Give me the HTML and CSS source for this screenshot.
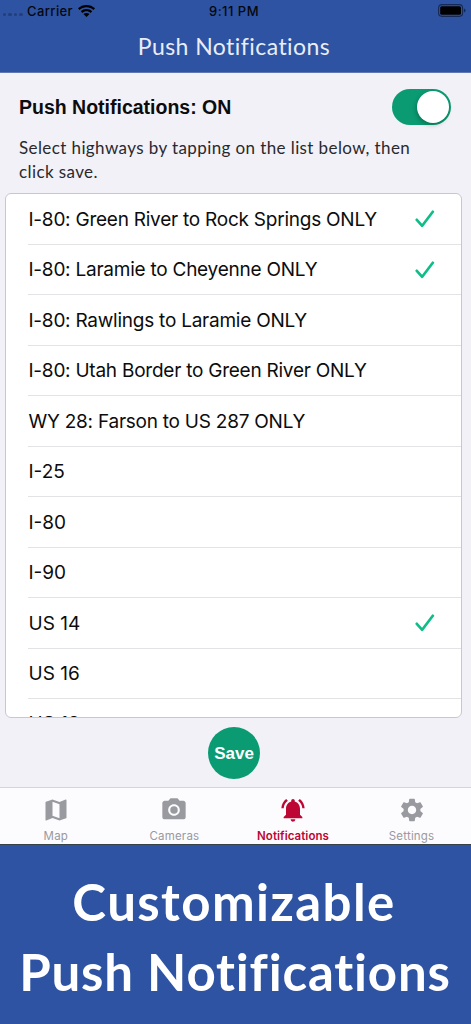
FILE: index.html
```html
<!DOCTYPE html>
<html lang="en">
<head>
<meta charset="utf-8">
<title>Push Notifications</title>
<link rel="stylesheet" href="styles.css">
</head>
<body>
<header class="header">
  <div class="status">
    <div class="carrier">
      <span class="dots"><i></i><i></i><i></i><i></i></span>
      <span class="carrier-name">Carrier</span>
      <svg class="wifi" viewBox="0 0 17 12"><path d="M8.5 0C5.2 0 2.2 1.2 0 3.3L1.6 5C3.400 3.300 5.800 2.300 8.500 2.300S13.600 3.300 15.400 5L17 3.300C14.800 1.200 11.800 0 8.500 0z"/><path d="M8.500 4C6.300 4 4.300 4.800 2.800 6.200L4.400 7.900C5.500 6.900 6.900 6.300 8.500 6.300S11.500 6.900 12.600 7.900L14.200 6.200C12.700 4.800 10.700 4 8.500 4z"/><path d="M8.500 7.900C7.300 7.900 6.300 8.300 5.500 9L8.500 12L11.500 9C10.700 8.300 9.700 7.900 8.500 7.900z"/></svg>
    </div>
    <span class="time">9:11 PM</span>
    <svg class="battery" viewBox="0 0 28 13"><rect x=".6" y=".6" width="24" height="11.800" rx="3.300" fill="none" stroke="#172a55" stroke-width="1.100"/><rect x="2.200" y="2.200" width="20.800" height="8.600" rx="1.600"/><path d="M26 4.500Q27.600 5 27.600 6.500T26 8.500z" fill="#172a55"/></svg>
  </div>
  <h1 class="title">Push Notifications</h1>
</header>
<main class="content">
  <div class="toggle-row">
    <h2 class="toggle-label">Push Notifications: ON</h2>
    <span class="switch"><span class="knob"></span></span>
  </div>
  <p class="hint">Select highways by tapping on the list below, then<br>click save.</p>
  <ul class="list">
    <li class="row"><span>I-80: Green River to Rock Springs ONLY</span><svg class="check" viewBox="0 0 20 18"><path d="M1.800 9.800L7.200 15.800L17.800 1.800"/></svg></li>
    <li class="row"><span>I-80: Laramie to Cheyenne ONLY</span><svg class="check" viewBox="0 0 20 18"><path d="M1.800 9.800L7.200 15.800L17.800 1.800"/></svg></li>
    <li class="row"><span>I-80: Rawlings to Laramie ONLY</span></li>
    <li class="row"><span>I-80: Utah Border to Green River ONLY</span></li>
    <li class="row"><span>WY 28: Farson to US 287 ONLY</span></li>
    <li class="row short"><span>I-25</span></li>
    <li class="row short"><span>I-80</span></li>
    <li class="row short"><span>I-90</span></li>
    <li class="row short"><span>US 14</span><svg class="check" viewBox="0 0 20 18"><path d="M1.800 9.800L7.200 15.800L17.800 1.800"/></svg></li>
    <li class="row short"><span>US 16</span></li>
    <li class="row short partial"><span>US 18</span></li>
  </ul>
  <button class="save">Save</button>
</main>
<nav class="tabs">
  <a class="tab"><svg class="icon" viewBox="0 0 24 24"><path d="M20.500 3l-.16.030L15 5.100 9 3 3.360 4.900c-.21.070-.36.250-.36.480V20.500c0 .28.220.500.500.500l.16-.030L9 18.900l6 2.100 5.640-1.900c.21-.070.36-.25.36-.48V3.500c0-.28-.22-.500-.500-.500zM15 19l-6-2.110V5l6 2.110V19z"/></svg><span>Map</span></a>
  <a class="tab"><svg class="icon" viewBox="0 0 24 24"><circle cx="12" cy="12" r="3.200"/><path d="M9 2L7.170 4H4c-1.100 0-2 .9-2 2v12c0 1.100.9 2 2 2h16c1.100 0 2-.9 2-2V6c0-1.100-.9-2-2-2h-3.170L15 2H9zm3 15c-2.760 0-5-2.240-5-5s2.240-5 5-5 5 2.240 5 5-2.240 5-5 5z"/></svg><span>Cameras</span></a>
  <a class="tab active"><svg class="icon" viewBox="0 0 24 24"><path d="M7.580 4.080L6.150 2.650C3.750 4.480 2.170 7.300 2.030 10.500h2c.15-2.650 1.510-4.970 3.550-6.420zm12.390 6.420h2c-.15-3.200-1.730-6.020-4.120-7.850l-1.420 1.430c2.020 1.450 3.390 3.770 3.540 6.420zM18 11c0-3.070-1.640-5.640-4.500-6.320V4c0-.83-.67-1.500-1.500-1.500s-1.500.67-1.500 1.500v.68C7.630 5.360 6 7.920 6 11v5l-2 2v1h16v-1l-2-2v-5zm-6 11c.14 0 .27-.010.400-.040.650-.14 1.180-.58 1.440-1.180.1-.24.150-.500.150-.78h-4c.010 1.100.9 2 2.010 2z"/></svg><span>Notifications</span></a>
  <a class="tab"><svg class="icon" viewBox="0 0 24 24"><path d="M19.140 12.940c.04-.3.060-.61.060-.94 0-.32-.02-.64-.07-.94l2.030-1.580c.18-.14.230-.41.120-.61l-1.920-3.320c-.12-.22-.37-.29-.59-.22l-2.390.96c-.5-.38-1.030-.7-1.620-.94l-.36-2.540c-.04-.24-.24-.41-.48-.41h-3.840c-.24 0-.43.17-.47.41l-.36 2.540c-.59.24-1.130.57-1.620.94l-2.390-.96c-.22-.08-.47 0-.59.22L2.740 8.870c-.12.21-.08.47.12.61l2.030 1.580c-.05.3-.09.63-.09.94s.02.64.07.94l-2.030 1.580c-.18.14-.23.41-.12.61l1.920 3.320c.12.220.37.290.59.220l2.390-.96c.5.380 1.030.7 1.620.940l.36 2.540c.05.240.24.410.48.410h3.840c.24 0 .44-.17.47-.41l.36-2.540c.59-.24 1.130-.56 1.620-.94l2.390.96c.22.080.47 0 .59-.22l1.920-3.320c.12-.22.070-.47-.12-.61l-2.010-1.580zM12 15.600c-1.980 0-3.600-1.620-3.600-3.600s1.620-3.600 3.600-3.600 3.600 1.620 3.600 3.600-1.620 3.600-3.600 3.600z"/></svg><span>Settings</span></a>
</nav>
<section class="banner">
  <div class="line-one">Customizable</div>
  <div class="line-two">Push Notifications</div>
</section>
</body>
</html>
```
FILE: styles.css
```css
* { box-sizing: border-box; }
body {
  margin: 0;
  width: 471px;
  height: 1024px;
  overflow: hidden;
  display: flex;
  flex-direction: column;
  background: #f2f1f8;
  color: #0c0c0d;
  font-family: Inter, sans-serif;
}
h1, h2, p, ul { margin: 0; padding: 0; }
.header { height: 73px; background: #2e53a2; border-bottom: 1px solid #6077b2; }
.status {
  height: 21px;
  display: grid;
  grid-template-columns: 1fr auto 1fr;
  align-items: center;
  padding: 0 6px 0 3px;
  color: #05070c;
  font-size: 13px;
  font-weight: 500;
}
.carrier { display: flex; align-items: center; }
.dots { display: flex; gap: 2px; width: 24px; padding-top: 8px; }
.dots i { width: 3.400px; height: 3.400px; border-radius: 50%; background: #233f7b; }
.carrier-name { letter-spacing: 0.400px; }
.time { letter-spacing: 0.500px; }
.wifi { width: 17px; height: 12px; margin-left: 5px; }
.battery { width: 28px; height: 13px; justify-self: end; margin-right: -1px; }
.title {
  color: #e9edf6;
  text-align: center;
  font: 400 23px/50px Lato, sans-serif;
  letter-spacing: 0.450px;
  padding-right: 3px;
}
.content { height: 714px; display: flex; flex-direction: column; }
.toggle-row {
  height: 63px;
  display: flex;
  justify-content: space-between;
  align-items: center;
  padding: 5px 20px 0 19px;
}
.toggle-label { font: 700 19.500px/24px "Liberation Sans", sans-serif; }
.switch {
  width: 59px;
  height: 36px;
  padding: 2px;
  border-radius: 18px;
  background: #0a9b72;
  display: flex;
  justify-content: flex-end;
}
.knob { width: 32px; height: 32px; border-radius: 50%; background: #fff; box-shadow: -1px 2px 4px rgba(0, 0, 0, .25); }
.hint {
  height: 57px;
  padding-left: 19px;
  color: #29292d;
  font: 400 17px/23.500px Lato, sans-serif;
  letter-spacing: 0.400px;
}
.list {
  width: 457px;
  height: 525px;
  margin-left: 5px;
  padding-left: 22px;
  overflow: hidden;
  list-style: none;
  background: #fff;
  border: 1px solid #c8c8cb;
  border-radius: 6px;
}
.row {
  height: 50.500px;
  display: flex;
  align-items: center;
  justify-content: space-between;
  padding: 1px 26px 0 0.500px;
  border-bottom: 1px solid #e3e3e5;
  font-size: 19px;
  letter-spacing: -0.240px;
  white-space: nowrap;
}
.row.short { letter-spacing: 0; }
.row.partial { padding-top: 0; padding-bottom: 1px; }
.check { width: 20px; height: 18px; fill: none; stroke: #10bd88; stroke-width: 2.700; stroke-linecap: round; stroke-linejoin: round; }
.save {
  width: 52px;
  height: 52px;
  margin: 9px 0 0 208px;
  padding: 1px 0 0;
  border: 0;
  border-radius: 50%;
  background: #0a9b72;
  color: #fff;
  font: 700 17px "Liberation Sans", sans-serif;
}
.tabs {
  height: 58px;
  display: grid;
  grid-template-columns: repeat(4, 118.600px);
  margin-left: -3.500px;
  background: #fcfcfe;
  border-top: 1px solid #d5d5de;
  border-bottom: 1px solid #354247;
}
.tab {
  display: flex;
  flex-direction: column;
  align-items: center;
  padding-top: 8px;
  color: #9999a0;
  font-size: 11.500px;
  line-height: 14px;
  font-weight: 400;
  letter-spacing: 0.200px;
}
.tab.active { color: #bd0634; font-weight: 600; letter-spacing: 0.050px; }
.icon { width: 28px; height: 28px; margin-bottom: 5px; fill: currentColor; }
.banner {
  flex: 1;
  background: #2e53a2;
  color: #fff;
  text-align: center;
  white-space: nowrap;
  padding-top: 22px;
  font: 700 51px/70px Lato, sans-serif;
  font-variant-ligatures: none;
}
.line-one { letter-spacing: 1.400px; padding-right: 3px; }
.line-two { letter-spacing: 0.820px; padding-right: 1px; }
```
